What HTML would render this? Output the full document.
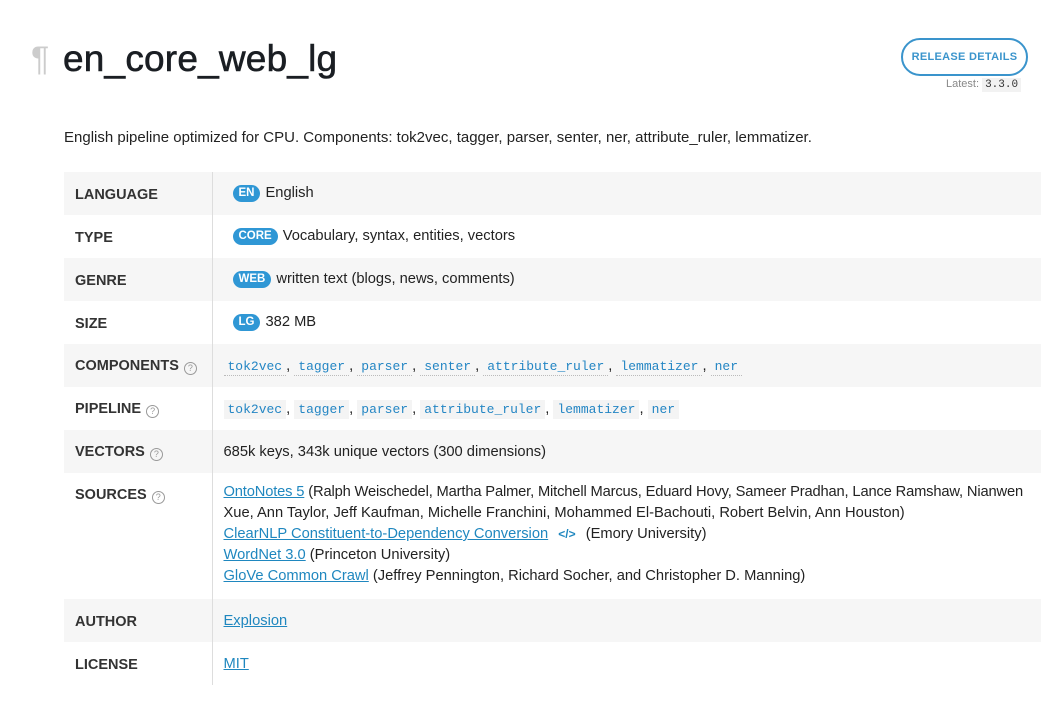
<!DOCTYPE html>
<html><head><meta charset="utf-8"><style>
body{margin:0;background:#fff;font-family:"Liberation Sans",sans-serif;color:#1e1935;width:1063px;height:716px;overflow:hidden;position:relative}
h1{position:absolute;left:63px;top:38px;margin:0;font-size:37px;font-weight:normal;color:#1a1e23;letter-spacing:0.2px;-webkit-text-stroke:0.6px #1a1e23}
.pil{position:absolute;left:31px;top:40px;font-size:34px;color:#ccc}
.btn{position:absolute;left:901px;top:38px;width:127px;height:38px;border:2px solid #3a94cc;border-radius:20px;box-sizing:border-box;color:#3a94cc;font-size:11px;font-weight:bold;text-align:center;line-height:35px;letter-spacing:.3px}
.latest{position:absolute;left:946px;top:78px;font-size:11px;color:#888}
.latest code{font-family:"Liberation Mono",monospace;background:#f2f2f2;color:#333;padding:1px 3px;font-size:11px}
.desc{position:absolute;left:64px;top:129px;font-size:15px;color:#222}
table{position:absolute;left:64px;top:172px;width:977px;border-collapse:collapse;font-size:14.7px}
td{padding:0;height:43px;vertical-align:middle;color:#222}
td.l{width:148px;padding-left:11px;box-sizing:border-box;font-weight:bold;color:#333;font-size:14.5px;border-right:1px solid #ddd;padding-top:2px}
td.v{padding-left:11px}
tr:nth-child(odd){background:#f6f6f6}
.b{display:inline-block;background:#2f97d5;color:#fff;font-size:11.5px;font-weight:bold;border-radius:9px;padding:2px 6px;margin-right:5px;margin-left:9px;line-height:13px;vertical-align:1px}
code.c{font-family:"Liberation Mono",monospace;font-size:13px;color:#2486c4;background:#f4f4f4;padding:2px 4px}
code.d{background:none;border-bottom:1px dotted #bbb;padding:1px 4px}
.q{display:inline-block;width:11px;height:11px;border:1px solid #999;border-radius:50%;font-size:9px;line-height:11px;text-align:center;color:#999;margin-left:5px;font-weight:normal;vertical-align:-1px}
a{color:#1f87bf;text-decoration:underline}
.src{line-height:21px;padding-top:9px;padding-bottom:12px;vertical-align:top;padding-right:4px}
</style></head><body>
<div class="pil">¶</div>
<h1>en_core_web_lg</h1>
<div class="btn">RELEASE DETAILS</div>
<div class="latest">Latest: <code>3.3.0</code></div>
<div class="desc">English pipeline optimized for CPU. Components: tok2vec, tagger, parser, senter, ner, attribute_ruler, lemmatizer.</div>
<table>
<tr><td class="l">LANGUAGE</td><td class="v"><span class="b">EN</span>English</td></tr>
<tr><td class="l">TYPE</td><td class="v"><span class="b">CORE</span>Vocabulary, syntax, entities, vectors</td></tr>
<tr><td class="l">GENRE</td><td class="v"><span class="b">WEB</span>written text (blogs, news, comments)</td></tr>
<tr><td class="l">SIZE</td><td class="v"><span class="b">LG</span>382 MB</td></tr>
<tr><td class="l">COMPONENTS<span class="q">?</span></td><td class="v"><code class="c d">tok2vec</code>, <code class="c d">tagger</code>, <code class="c d">parser</code>, <code class="c d">senter</code>, <code class="c d">attribute_ruler</code>, <code class="c d">lemmatizer</code>, <code class="c d">ner</code></td></tr>
<tr><td class="l">PIPELINE<span class="q">?</span></td><td class="v"><code class="c">tok2vec</code>, <code class="c">tagger</code>, <code class="c">parser</code>, <code class="c">attribute_ruler</code>, <code class="c">lemmatizer</code>, <code class="c">ner</code></td></tr>
<tr><td class="l">VECTORS<span class="q">?</span></td><td class="v">685k keys, 343k unique vectors (300 dimensions)</td></tr>
<tr><td class="l" style="vertical-align:top;padding-top:14px">SOURCES<span class="q">?</span></td><td class="v src"><span style="white-space:nowrap;letter-spacing:-0.15px"><a>OntoNotes 5</a> (Ralph Weischedel, Martha Palmer, Mitchell Marcus, Eduard Hovy, Sameer Pradhan, Lance Ramshaw, Nianwen</span><br>Xue, Ann Taylor, Jeff Kaufman, Michelle Franchini, Mohammed El-Bachouti, Robert Belvin, Ann Houston)<br><a>ClearNLP Constituent-to-Dependency Conversion</a> <span style="color:#1f87bf;font-weight:bold;font-size:12px;margin:0 6px">&lt;/&gt;</span> (Emory University)<br><a>WordNet 3.0</a> (Princeton University)<br><a>GloVe Common Crawl</a> (Jeffrey Pennington, Richard Socher, and Christopher D. Manning)</td></tr>
<tr><td class="l">AUTHOR</td><td class="v"><a>Explosion</a></td></tr>
<tr><td class="l">LICENSE</td><td class="v"><a>MIT</a></td></tr>
</table>
</body></html>
